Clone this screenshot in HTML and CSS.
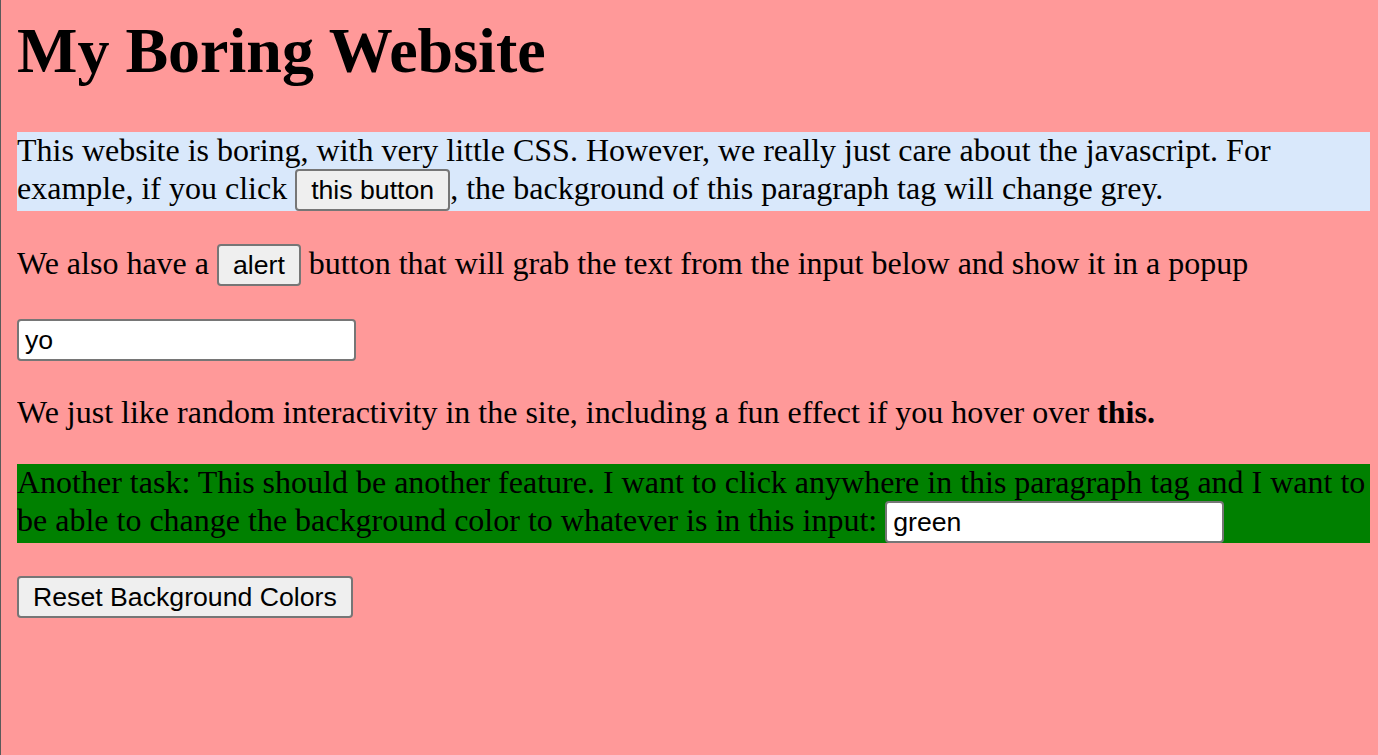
FILE: index.html
```html
<!DOCTYPE html>
<html>
<head>
<meta charset="utf-8">
<title>My Boring Website</title>
<link rel="stylesheet" href="styles.css">
</head>
<body>
<h1 class="title">My Boring Website</h1>
<p class="para blue">This website is boring, with very little CSS. However, we really just care about the javascript. For example, if you click <button class="btn">this button</button>, the background of this paragraph tag will change grey.</p>
<p class="para">We also have a <button class="btn">alert</button> button that will grab the text from the input below and show it in a popup</p>
<p class="para"><input class="field" type="text" value="yo"></p>
<p class="para">We just like random interactivity in the site, including a fun effect if you hover over <strong>this.</strong></p>
<p class="para green">Another task: This should be another feature. I want to click anywhere in this paragraph tag and I want to be able to change the background color to whatever is in this input: <input class="field" type="text" value="green"></p>
<button class="btn">Reset Background Colors</button>
</body>
</html>
```
FILE: styles.css
```css
html {
  background: #ff9999;
  border-left: 1px solid #5a5a5a;
  min-height: 100%;
  box-sizing: border-box;
}
body {
  margin: 0 8px 0 16px;
  font-family: "Liberation Serif", "Times New Roman", serif;
  color: #000;
}
.title {
  font-size: 64px;
  line-height: 74px;
  margin: 14px 0 44px;
  font-weight: bold;
}
.para {
  font-size: 32px;
  line-height: 37px;
  margin: 0 0 33px;
}
.blue {
  background: #d9e8fb;
}
.green {
  background: #008000;
}
.btn {
  font-family: "Liberation Sans", Arial, sans-serif;
  font-size: 26.67px;
  line-height: 30px;
  padding: 4px 14px;
  border: 2px solid #767676;
  border-radius: 4px;
  background: #efefef;
  color: #000;
  vertical-align: baseline;
  margin: 0;
}
.field {
  font-family: "Liberation Sans", Arial, sans-serif;
  font-size: 26.67px;
  line-height: 30px;
  width: 339px;
  height: 42px;
  box-sizing: border-box;
  padding: 4px 6px;
  border: 2px solid #767676;
  border-radius: 4px;
  background: #fff;
  color: #000;
  margin: 0;
}
```
